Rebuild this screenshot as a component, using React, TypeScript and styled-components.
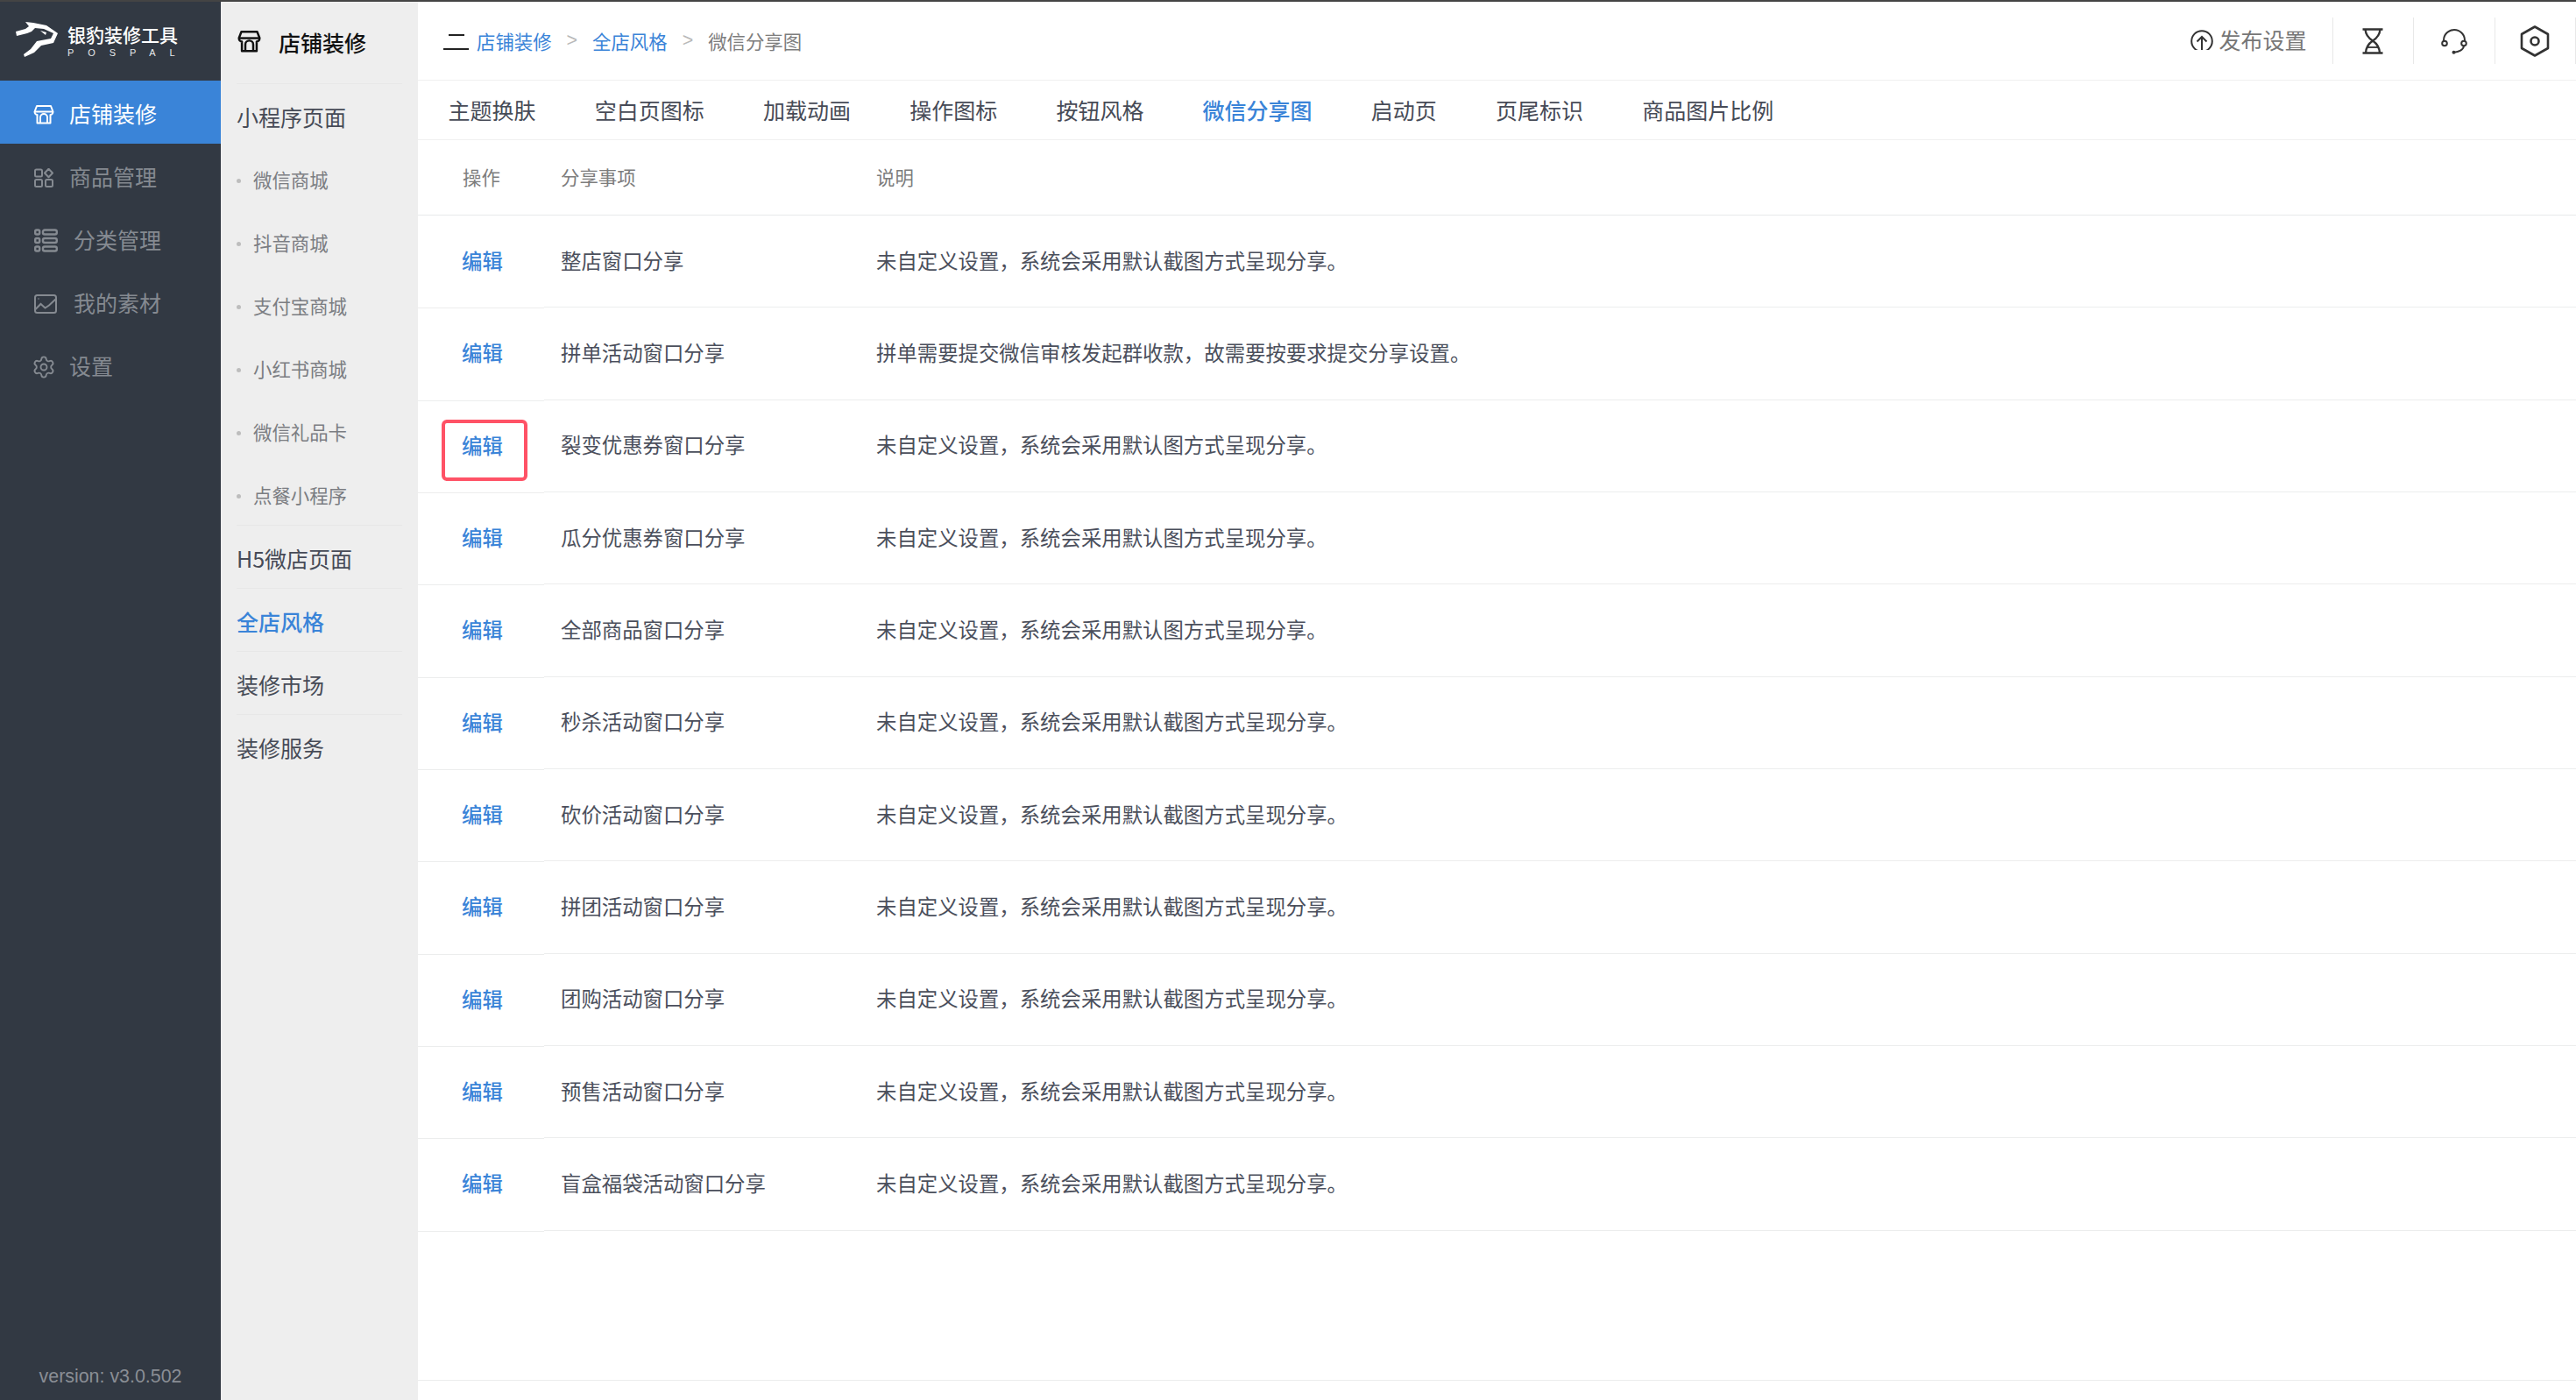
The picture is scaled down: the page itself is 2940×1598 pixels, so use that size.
import React from "react";
import styled, { createGlobalStyle } from "styled-components";
import { Settings } from "lucide-react";

const Global = createGlobalStyle`
  html, body { margin: 0; height: 100%; background: #fff; }
  #root { height: 100%; }
  * { box-sizing: border-box; }
  body { font-family: "Noto Sans CJK SC", "Liberation Sans", sans-serif; }
`;

const Page = styled.div`
  height: 100vh;
  display: flex;
  flex-direction: column;
  overflow: hidden;
`;
const TopStrip = styled.div`
  height: 2px;
  background: #444;
  flex: none;
`;
const Body = styled.div`
  flex: 1;
  display: flex;
  min-height: 0;
`;
const Sidebar = styled.aside`
  width: 252px;
  flex: none;
  background: #323943;
  display: flex;
  flex-direction: column;
`;
const Logo = styled.div`
  height: 90px;
  display: flex;
  align-items: flex-start;
  padding: 23px 0 0 18px;
  color: #fff;
`;
const LogoText = styled.div`
  margin-left: 11px;
  margin-top: 2px;
  display: flex;
  flex-direction: column;
`;
const LogoTitle = styled.div`
  font-size: 21px;
  line-height: 24px;
  font-weight: 500;
  white-space: nowrap;
`;
const LogoSub = styled.div`
  font-family: "Liberation Sans", sans-serif;
  font-size: 11px;
  line-height: 12px;
  margin-top: 3px;
  letter-spacing: 15.9px;
  color: #e6e7e9;
  white-space: nowrap;
`;
const NavItem = styled.div<{ $active?: boolean }>`
  height: 72px;
  display: flex;
  align-items: center;
  padding: 1px 0 0 39px;
  font-size: 25px;
  color: ${(p) => (p.$active ? "#fff" : "#858a91")};
  background: ${(p) => (p.$active ? "#3a84d8" : "transparent")};
`;
const NavIcon = styled.span<{ $wide?: boolean }>`
  width: ${(p) => (p.$wide ? 45 : 40)}px;
  flex: none;
  display: flex;
  margin-top: 4px;
`;
const Version = styled.div`
  margin-top: auto;
  height: 54px;
  text-align: center;
  font-family: "Liberation Sans", sans-serif;
  font-size: 21.4px;
  line-height: 54px;
  color: #8a8e95;
`;
const SubPanel = styled.nav`
  width: 225px;
  flex: none;
  background: #eee;
  padding: 0 18px;
`;
const SubHead = styled.div`
  height: 94px;
  display: flex;
  align-items: center;
  padding: 0 0 2px 2px;
  border-bottom: 1px solid #e7e7e7;
  font-size: 25px;
  font-weight: 500;
  color: #111;
`;
const SubHeadIcon = styled.span`
  width: 46px;
  display: flex;
  flex: none;
`;
const SubTitle = styled.div<{ $line?: boolean; $active?: boolean }>`
  height: 72px;
  display: flex;
  align-items: center;
  padding-top: 3px;
  font-size: 25px;
  font-weight: ${(p) => (p.$active ? 500 : 400)};
  color: ${(p) => (p.$active ? "#3a84d8" : "#474b57")};
  border-bottom: 1px solid ${(p) => (p.$line ? "#e7e7e7" : "transparent")};
`;
const SubItem = styled.div<{ $line?: boolean }>`
  height: 72px;
  display: flex;
  align-items: center;
  padding-top: 2px;
  font-size: 21.4px;
  color: #7b7d82;
  border-bottom: 1px solid ${(p) => (p.$line ? "#e7e7e7" : "transparent")};
  &::before {
    content: "";
    width: 5px;
    height: 5px;
    border-radius: 50%;
    background: #bdbdbd;
    margin: 3px 14px 0 0;
    flex: none;
  }
`;
const Main = styled.main`
  flex: 1;
  min-width: 0;
  display: flex;
  flex-direction: column;
`;
const Header = styled.header`
  height: 90px;
  flex: none;
  display: flex;
  align-items: flex-start;
  justify-content: space-between;
  border-bottom: 1px solid #f0f0f0;
`;
const Crumbs = styled.div`
  height: 89px;
  padding: 0 0 0 29px;
  display: flex;
  align-items: center;
  font-size: 21.4px;
  color: #7d7d7d;
`;
const CrumbLink = styled.span`
  color: #3a84d8;
`;
const CrumbSep = styled.span`
  font-family: "Liberation Sans", sans-serif;
  color: #b9b9b9;
  margin: 0 17px;
`;
const CrumbIcon = styled.span`
  display: flex;
  width: 38px;
  flex: none;
  margin-top: 3px;
`;
const Tools = styled.div`
  display: flex;
  margin-top: 18px;
`;
const Publish = styled.div`
  height: 53px;
  display: flex;
  align-items: center;
  gap: 6px;
  padding: 0 29px 3px 0;
  font-size: 25px;
  color: #767676;
  border-right: 1px solid #e8e8e8;
`;
const ToolCell = styled.div`
  width: 92.5px;
  height: 53px;
  display: flex;
  align-items: center;
  justify-content: center;
  border-right: 1px solid #e8e8e8;
`;
const Tabs = styled.div`
  height: 68px;
  flex: none;
  display: flex;
  align-items: center;
  padding: 0 0 1px 1px;
  border-bottom: 1px solid #f0f0f0;
`;
const Tab = styled.div<{ $active?: boolean }>`
  padding: 0 33.6px;
  font-size: 25px;
  font-weight: ${(p) => (p.$active ? 500 : 400)};
  color: ${(p) => (p.$active ? "#3a84d8" : "#474b57")};
  white-space: nowrap;
`;
const TableHead = styled.div`
  height: 86px;
  flex: none;
  display: flex;
  align-items: center;
  padding-bottom: 3px;
  font-size: 21.4px;
  color: #7d7d7d;
  border-bottom: 1px solid #e8e9eb;
`;
const HeadAction = styled.div`
  width: 144px;
  padding-left: 51px;
`;
const HeadName = styled.div`
  width: 379px;
  padding-left: 19px;
`;
const Row = styled.div`
  height: 105.33px;
  flex: none;
  display: flex;
  font-size: 23.4px;
  color: #4b4f5c;
`;
const ActionCell = styled.div`
  width: 144px;
  flex: none;
  position: relative;
  display: flex;
  align-items: center;
  padding: 0 0 3px 50px;
  margin-bottom: -1px;
  color: #3a84d8;
  font-weight: 500;
  border-bottom: 1px solid #eceded;
`;
const Highlight = styled.span`
  position: absolute;
  left: 27px;
  top: 22px;
  width: 98px;
  height: 70px;
  border: 4px solid #ff5266;
  border-radius: 6px;
`;
const RowMain = styled.div`
  flex: 1;
  display: flex;
  align-items: center;
  padding-bottom: 3px;
  border-bottom: 1px solid #eceded;
`;
const NameCell = styled.div`
  width: 379px;
  flex: none;
  padding-left: 19px;
`;
const DescCell = styled.div`
  white-space: nowrap;
`;
const Footer = styled.div`
  margin-top: auto;
  height: 23px;
  flex: none;
  border-top: 1px solid #eceded;
`;

const StoreIcon = ({ size, color, sw }: { size: number; color: string; sw: number }) => (
  <svg width={size} height={size} viewBox="0 0 24 24" fill="none" stroke={color} strokeWidth={sw} strokeLinejoin="round" style={{ marginLeft: -1.5 }}>
    <path d="M4 2h16l2.500 6.500c0 2.200-1.600 3.500-3 3.500v9.500h-15V12c-1.400 0-3-1.300-3-3.500z" />
    <path d="M1.500 8.500h21" />
    <path d="M8 21.500V15a4 4 0 0 1 8 0v6.500" />
  </svg>
);

const GridIcon = () => (
  <svg width="22" height="22" viewBox="0 0 22 22" fill="none" stroke="#858a91" strokeWidth="2">
    <rect x="1" y="1.500" width="8" height="8" rx="1.500" />
    <path d="M16.500 0.800l4.500 4.700-4.500 4.700-4.500-4.700z" strokeLinejoin="round" />
    <rect x="1" y="13" width="8" height="8" rx="1.500" />
    <rect x="13" y="13" width="8" height="8" rx="1.500" />
  </svg>
);
const ListIcon = () => (
  <svg width="27" height="27" viewBox="0 0 27 27" fill="none" stroke="#858a91" strokeWidth="2.400">
    <rect x="1.200" y="1.500" width="5" height="5" rx="1.500" />
    <rect x="1.200" y="11" width="5" height="5" rx="1.500" />
    <rect x="1.200" y="20.500" width="5" height="5" rx="1.500" />
    <rect x="10" y="1.500" width="15.800" height="5" rx="2" />
    <rect x="10" y="11" width="15.800" height="5" rx="2" />
    <rect x="10" y="20.500" width="15.800" height="5" rx="2" />
  </svg>
);
const ImageIcon = () => (
  <svg width="26" height="22" viewBox="0 0 26 22" fill="none" stroke="#858a91" strokeWidth="2">
    <rect x="1" y="1" width="24" height="20" rx="2.500" />
    <path d="M1.500 17l6-6 5 4.500 4.500-3 7.500-7" />
    <circle cx="5" cy="5" r="0.800" fill="#858a91" stroke="none" />
  </svg>
);
const BrandMark = () => (
  <svg width="48" height="40" viewBox="18 25 48 40" fill="#fff">
    <polygon points="29,25 38,26 53,29 66,38 61,49 47,52 39,60 28,65 27,62 35,56 42,47 58,44 61,38 50,33 40,32 36,36 31,38 19,41 18,36 29,33 33,30" />
    <polygon points="46,35 53,37 52,40" />
  </svg>
);
const MenuIcon = () => (
  <svg width="30" height="18" viewBox="0 0 30 18" fill="none" stroke="#222" strokeWidth="2">
    <path d="M6 1h18M0 17h29" />
  </svg>
);
const UploadIcon = () => (
  <svg width="26" height="23" viewBox="0 0 26 23" fill="none" stroke="#333" strokeWidth="2">
    <circle cx="13" cy="13" r="11.800" />
    <path d="M13 23V8M7.500 13.500L13 8l5.500 5.500" />
  </svg>
);
const HourglassIcon = () => (
  <svg width="24" height="30" viewBox="0 0 24 30" fill="none" stroke="#333" strokeWidth="2.400">
    <path d="M0.500 1.500h23M0.500 28.500h23" />
    <path d="M3.500 1.500c.5 6 3.500 10 8.500 13 5-3 8-7 8.500-13" />
    <path d="M4 28.500c.2-5 3-10.500 8-14 5 3.500 7.800 9 8 14" />
    <path d="M6 22h12" strokeWidth="1.800" />
  </svg>
);
const HeadsetIcon = () => (
  <svg width="30" height="30" viewBox="0 0 30 30" fill="none" stroke="#333" strokeWidth="2">
    <path d="M3 14a12 12 0 0 1 24 0" />
    <circle cx="4" cy="17.500" r="2.800" />
    <circle cx="26" cy="17.500" r="2.800" />
    <path d="M26 20.500c-.5 4.500-6 7-11 7.300" />
    <circle cx="14.500" cy="27.700" r="2" fill="#333" stroke="none" />
  </svg>
);
const HexIcon = () => (
  <svg width="34" height="36" viewBox="0 0 34 36" fill="none" stroke="#333" strokeWidth="2.600" strokeLinejoin="round">
    <path d="M17 1.500l15 8.500v16l-15 8.500-15-8.500V10z" />
    <circle cx="17" cy="18" r="4.500" />
  </svg>
);

const WITH_CAPTURE = "未自定义设置，系统会采用默认截图方式呈现分享。";
const PLAIN = "未自定义设置，系统会采用默认图方式呈现分享。";
const shares = [
  { name: "整店窗口分享", desc: WITH_CAPTURE },
  { name: "拼单活动窗口分享", desc: "拼单需要提交微信审核发起群收款，故需要按要求提交分享设置。" },
  { name: "裂变优惠券窗口分享", desc: PLAIN, marked: true },
  { name: "瓜分优惠券窗口分享", desc: PLAIN },
  { name: "全部商品窗口分享", desc: PLAIN },
  { name: "秒杀活动窗口分享", desc: WITH_CAPTURE },
  { name: "砍价活动窗口分享", desc: WITH_CAPTURE },
  { name: "拼团活动窗口分享", desc: WITH_CAPTURE },
  { name: "团购活动窗口分享", desc: WITH_CAPTURE },
  { name: "预售活动窗口分享", desc: WITH_CAPTURE },
  { name: "盲盒福袋活动窗口分享", desc: WITH_CAPTURE },
];
const tabs = ["主题换肤", "空白页图标", "加载动画", "操作图标", "按钮风格", "微信分享图", "启动页", "页尾标识", "商品图片比例"];
const miniPrograms = ["微信商城", "抖音商城", "支付宝商城", "小红书商城", "微信礼品卡", "点餐小程序"];

export default function App() {
  return (
    <Page>
      <Global />
      <TopStrip />
      <Body>
        <Sidebar>
          <Logo>
            <BrandMark />
            <LogoText>
              <LogoTitle>银豹装修工具</LogoTitle>
              <LogoSub>POSPAL</LogoSub>
            </LogoText>
          </Logo>
          <NavItem $active>
            <NavIcon><StoreIcon size={24} color="#fff" sw={2} /></NavIcon>店铺装修
          </NavItem>
          <NavItem>
            <NavIcon><GridIcon /></NavIcon>商品管理
          </NavItem>
          <NavItem>
            <NavIcon $wide><ListIcon /></NavIcon>分类管理
          </NavItem>
          <NavItem>
            <NavIcon $wide><ImageIcon /></NavIcon>我的素材
          </NavItem>
          <NavItem>
            <NavIcon><Settings size={28} color="#858a91" strokeWidth={1.6} style={{ marginLeft: -3 }} /></NavIcon>设置
          </NavItem>
          <Version>version: v3.0.502</Version>
        </Sidebar>
        <SubPanel>
          <SubHead>
            <SubHeadIcon><StoreIcon size={27} color="#111" sw={2.2} /></SubHeadIcon>店铺装修
          </SubHead>
          <SubTitle>小程序页面</SubTitle>
          {miniPrograms.map((m, i) => (
            <SubItem key={m} $line={i === miniPrograms.length - 1}>{m}</SubItem>
          ))}
          <SubTitle $line>H5微店页面</SubTitle>
          <SubTitle $line $active>全店风格</SubTitle>
          <SubTitle $line>装修市场</SubTitle>
          <SubTitle>装修服务</SubTitle>
        </SubPanel>
        <Main>
          <Header>
            <Crumbs>
              <CrumbIcon><MenuIcon /></CrumbIcon>
              <CrumbLink>店铺装修</CrumbLink>
              <CrumbSep>&gt;</CrumbSep>
              <CrumbLink>全店风格</CrumbLink>
              <CrumbSep>&gt;</CrumbSep>
              微信分享图
            </Crumbs>
            <Tools>
              <Publish><UploadIcon />发布设置</Publish>
              <ToolCell><HourglassIcon /></ToolCell>
              <ToolCell><HeadsetIcon /></ToolCell>
              <ToolCell><HexIcon /></ToolCell>
            </Tools>
          </Header>
          <Tabs>
            {tabs.map((t) => (
              <Tab key={t} $active={t === "微信分享图"}>{t}</Tab>
            ))}
          </Tabs>
          <TableHead>
            <HeadAction>操作</HeadAction>
            <HeadName>分享事项</HeadName>
            <div>说明</div>
          </TableHead>
          {shares.map((s) => (
            <Row key={s.name}>
              <ActionCell>
                编辑
                {s.marked && <Highlight />}
              </ActionCell>
              <RowMain>
                <NameCell>{s.name}</NameCell>
                <DescCell>{s.desc}</DescCell>
              </RowMain>
            </Row>
          ))}
          <Footer />
        </Main>
      </Body>
    </Page>
  );
}
